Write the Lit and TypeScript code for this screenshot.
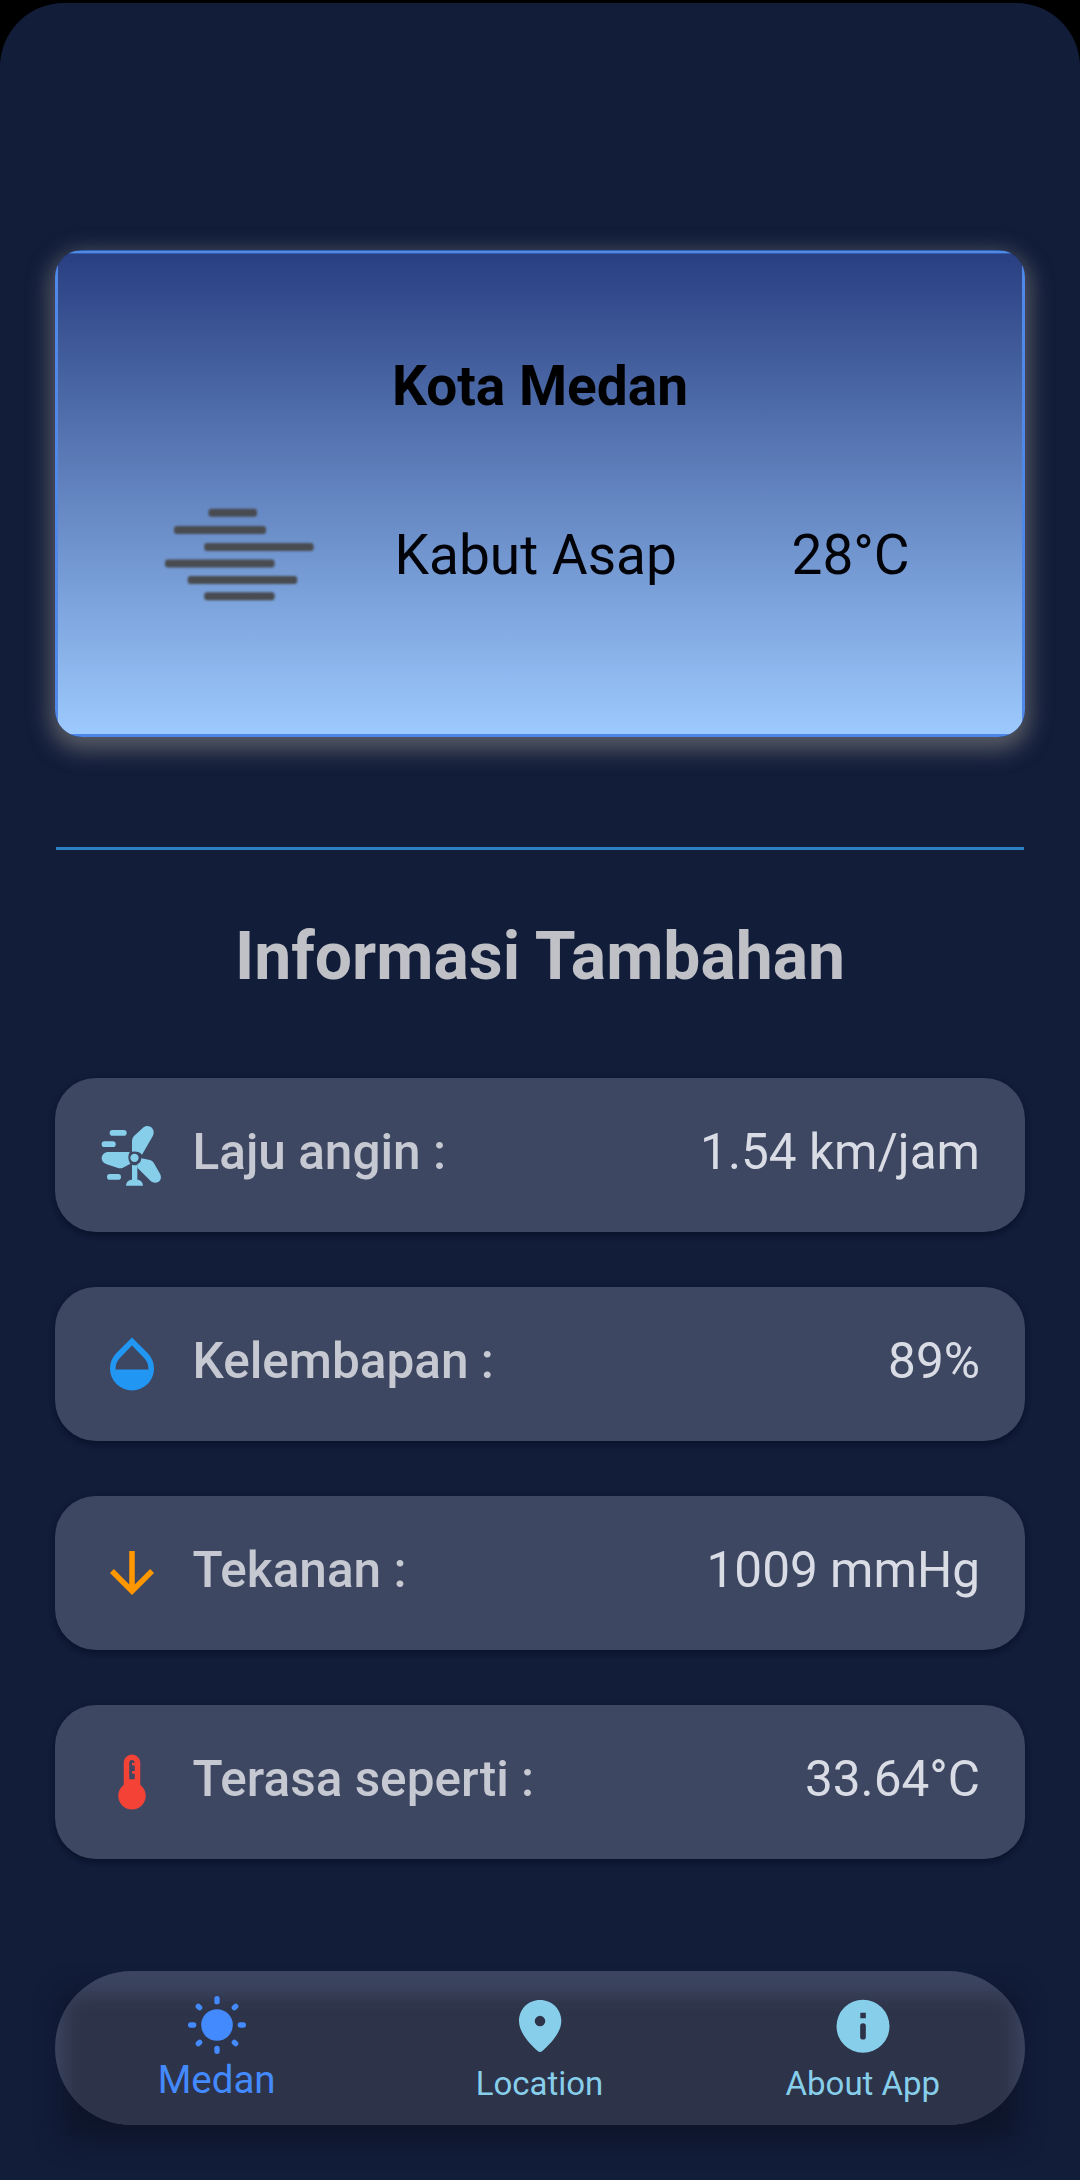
import { LitElement, html, css, svg, TemplateResult } from "lit";
import { customElement, property } from "lit/decorators.js";

const windIcon = svg`
  <g fill="#87ceeb">
    <rect x="89" y="90" width="51" height="17.5" rx="8.5"/>
    <rect x="65" y="123.500" width="42" height="17.5" rx="8.5"/>
    <rect x="81" y="222" width="42" height="17.5" rx="8.5"/>
    <circle cx="163.500" cy="173.500" r="12.500"/>
    <path d="M156 155V122Q156 114 162 108L189 83C197 76 209 77 216 84C222 91 223 100 218 109L186 164Q176 152 156 155Z"/>
    <path d="M149 156H86C74 156 65 164 65 175C65 184 71 190 80 193L114 204Q122 206 129 203L151 191Q140 174 149 156Z"/>
    <path d="M184 175L210 180Q217 182 221 188L240 221C245 231 243 240 236 245C228 250 219 249 212 243L172 203V193Q183 188 184 175Z"/>
    <path d="M156 194Q164 197 172 194V239H174Q188 242 189 257H138Q139 242 153 239H156Z"/>
  </g>`;

const dropIcon = svg`<path fill="#2196f3" d="M17.66 8L12 2.350 6.340 8C4.780 9.560 4 11.640 4 13.640s.78 4.110 2.340 5.670 3.610 2.350 5.660 2.350 4.100-.79 5.660-2.350S20 15.640 20 13.640 19.220 9.560 17.660 8zM6 14c.01-2 .62-3.270 1.760-4.400L12 5.270l4.240 4.380C17.380 10.770 17.990 12 18 14H6z"/>`;
const arrowIcon = svg`<path fill="#ff9800" d="M20 12l-1.410-1.410L13 16.170V4h-2v12.170l-5.580-5.590L4 12l8 8 8-8z"/>`;
const thermoIcon = svg`<path fill="#f44336" d="M15 13V5c0-1.660-1.340-3-3-3S9 3.340 9 5v8c-1.210.91-2 2.370-2 4 0 2.760 2.240 5 5 5s5-2.240 5-5c0-1.630-.79-3.090-2-4zm-4-8c0-.55.45-1 1-1s1 .45 1 1h-1v1h1v2h-1v1h1v2h-2V5z"/>`;

const sunIcon = svg`
  <g fill="#448aff">
    <circle cx="650" cy="255" r="47.500"/>
    ${[0, 90, 180, 270].map(a => svg`<rect x="642" y="168" width="16" height="25" rx="8" transform="rotate(${a} 650 255)"/>`)}
    ${[45, 135, 225, 315].map(a => svg`<rect x="642" y="167.500" width="16" height="22" rx="8" transform="rotate(${a} 650 255)"/>`)}
  </g>`;
const pinIcon = svg`<path fill="#87ceeb" fill-rule="evenodd" d="M420 180C384 180 357 208 357 243C357 279 391 313 413 333Q420 339 427 333C449 313 484 279 484 243C484 208 456 180 420 180ZM420 227.500A15.800 15.800 0 1 1 420 259.100A15.800 15.800 0 1 1 420 227.500Z"/>`;
const infoIcon = svg`<path fill="#87ceeb" fill-rule="evenodd" d="M370 179.500A79.500 79.500 0 1 1 370 338.500A79.500 79.500 0 1 1 370 179.500ZM362 218V234.500H378.500V218ZM361.500 258V290A8.500 8.500 0 0 0 378.500 290V258A8.500 8.500 0 0 0 361.500 258Z"/>`;

@customElement("info-row")
class InfoRow extends LitElement {
  @property() label = "";
  @property() value = "";
  @property() box = "0 0 24 24";
  @property({ attribute: false }) icon: TemplateResult | null = null;

  static styles = css`
    :host {
      display: flex;
      align-items: center;
      box-sizing: border-box;
      height: 154px;
      padding: 0 45px 0 44px;
      border-radius: 41px;
      background: #3d4762;
      box-shadow: 0 4px 5px rgba(4, 8, 24, 0.35), 0 1px 7px rgba(4, 8, 24, 0.15);
      font-size: 49.5px;
      line-height: 58px;
    }
    .icon { width: 66px; height: 66px; margin-right: 27.5px; flex: none; }
    .label { flex: 1; padding-bottom: 7px; font-weight: 500; color: #c6c9d1; }
    .value { padding-bottom: 7px; color: #d9dce4; }
  `;

  render() {
    return html`
      <svg class="icon" viewBox=${this.box}>${this.icon}</svg>
      <span class="label">${this.label}</span>
      <span class="value">${this.value}</span>
    `;
  }
}

const rows = [
  { label: "Laju angin :", value: "1.54 km/jam", icon: windIcon, box: "57 66 198 198" },
  { label: "Kelembapan :", value: "89%", icon: dropIcon, box: "0 0 24 24" },
  { label: "Tekanan :", value: "1009 mmHg", icon: arrowIcon, box: "0 0 24 24" },
  { label: "Terasa seperti :", value: "33.64°C", icon: thermoIcon, box: "0 0 24 24" },
];

const tabs = [
  { label: "Medan", icon: sunIcon, box: "551 156 198 198", active: true },
  { label: "Location", icon: pinIcon, box: "321 156 198 198", active: false },
  { label: "About App", icon: infoIcon, box: "271 156 198 198", active: false },
];

@customElement("app-root")
class AppRoot extends LitElement {
  static styles = css`
    :host {
      display: block;
      height: 2183px;
      overflow: hidden;
      background: #fff;
      font-family: Roboto, "Liberation Sans", sans-serif;
    }
    .screen {
      box-sizing: border-box;
      height: 2180px;
      border-top: 3px solid #000;
      background: #000;
      overflow: hidden;
    }
    .page {
      display: flex;
      flex-direction: column;
      box-sizing: border-box;
      height: 2177px;
      padding: 247px 55px 0;
      border-radius: 64px 64px 0 0;
      background: #121d3a;
    }
    .glow {
      border-radius: 27px;
      box-shadow: 0 8px 22px 5px rgba(158, 153, 146, 0.5);
    }
    .weather {
      box-sizing: border-box;
      height: 487px;
      padding-top: 104px;
      border-radius: 27px;
      overflow: hidden;
      background:
        linear-gradient(#2f60b2 0 1px, #5289e4 1px 3px, #2f5fae 3px) 0 0 / 100% 4px no-repeat,
        linear-gradient(#4c86e6, #4c86e6) 0 100% / 100% 3px no-repeat,
        linear-gradient(#4f88e8, #4f88e8) 0 0 / 3px 100% no-repeat,
        linear-gradient(#4f88e8, #4f88e8) 100% 0 / 3px 100% no-repeat,
        linear-gradient(#283e80, #9dcaff);
      color: #020309;
      font-size: 55px;
      line-height: 64px;
    }
    .city { text-align: center; font-weight: 700; color: #000; }
    .now { display: flex; align-items: center; margin-top: 83px; padding: 24px 0 0 102.5px; }
    .fog { width: 166px; height: 110px; margin: -25px 71px 0 0; filter: blur(0.9px); }
    .desc { width: 397px; margin-top: -25px; }
    .temp { margin-top: -25px; }
    .rule { height: 3px; margin: 110px 1px 0; background: #2d80c4; }
    .heading {
      margin: 68px 0 0;
      text-align: center;
      font-size: 66px;
      line-height: 78px;
      font-weight: 700;
      color: #c0c1c6;
    }
    .list { display: flex; flex-direction: column; gap: 55px; margin-top: 82px; }
    .dock { position: relative; z-index: 0; margin-top: 112px; }
    .dock::before {
      content: "";
      position: absolute;
      z-index: -1;
      inset: 20px 6px -16px;
      border-radius: 10px;
      background: rgba(6, 9, 22, 0.42);
      filter: blur(13px);
    }
    .bar {
      position: relative;
      display: grid;
      grid-template-columns: repeat(3, 1fr);
      height: 154px;
      border-radius: 77px;
      overflow: hidden;
      background: #3c4561;
    }
    .bar::before {
      content: "";
      position: absolute;
      inset: 24px 10px -40px;
      border-radius: 8px;
      background: #2d3348;
      filter: blur(10px);
    }
    .tab {
      position: relative;
      display: flex;
      flex-direction: column;
      align-items: center;
      padding-top: 21px;
      color: #87ceeb;
      font-size: 33px;
      line-height: 39px;
    }
    .tab svg { width: 66px; height: 66px; flex: none; }
    .tab span { margin: 6px 1px 0 0; }
    .tab.active { color: #448aff; font-size: 38.5px; line-height: 45px; }
    .tab.active span { margin: -1px 0 0; }
  `;

  render() {
    return html`
      <div class="screen">
        <main class="page">
          <div class="glow">
            <section class="weather">
              <div class="city">Kota Medan</div>
              <div class="now">
                <svg class="fog" viewBox="158 500 166 110" fill="#484b50">
                  <rect x="208.500" y="508.700" width="48.500" height="8" rx="3"/>
                  <rect x="174" y="525.900" width="92" height="8" rx="3"/>
                  <rect x="204.200" y="543" width="109.400" height="8" rx="3"/>
                  <rect x="165" y="559.500" width="109.600" height="8" rx="3"/>
                  <rect x="187.700" y="576" width="109.500" height="8" rx="3"/>
                  <rect x="204.200" y="592.300" width="70.400" height="8" rx="3"/>
                </svg>
                <span class="desc">Kabut Asap</span>
                <span class="temp">28°C</span>
              </div>
            </section>
          </div>
          <div class="rule"></div>
          <h1 class="heading">Informasi Tambahan</h1>
          <div class="list">
            ${rows.map(r => html`<info-row .label=${r.label} .value=${r.value} .icon=${r.icon} .box=${r.box}></info-row>`)}
          </div>
          <div class="dock">
            <nav class="bar">
              ${tabs.map(t => html`
                <div class="tab ${t.active ? "active" : ""}">
                  <svg viewBox=${t.box}>${t.icon}</svg>
                  <span>${t.label}</span>
                </div>`)}
            </nav>
          </div>
        </main>
      </div>
    `;
  }
}
